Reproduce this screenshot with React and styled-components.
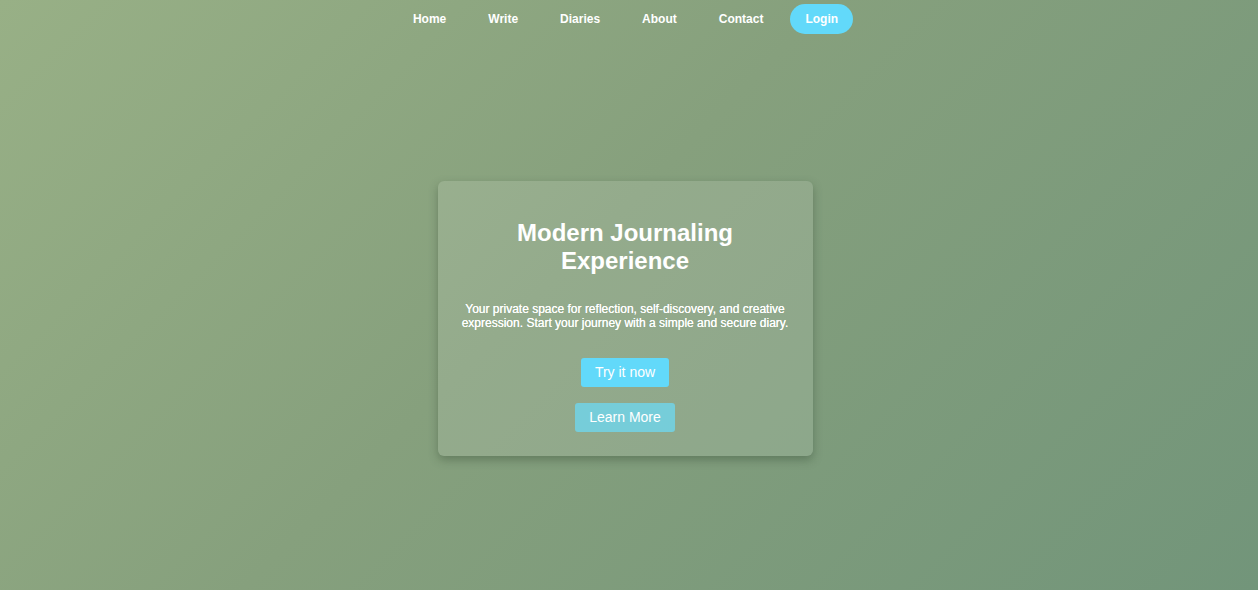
import React from "react";
import styled, { createGlobalStyle } from "styled-components";

const Global = createGlobalStyle`
  html, body { margin: 0; padding: 0; height: 100%; }
  body {
    font-family: "Liberation Sans", Arial, sans-serif;
    background: linear-gradient(135deg, #98b086 0%, #86a07d 45%, #72957a 100%);
    min-height: 590px;
    color: #fff;
  }
`;

const Page = styled.div`
  min-height: 590px;
  display: flex;
  flex-direction: column;
`;

const Nav = styled.nav`
  display: flex;
  justify-content: center;
  align-items: center;
  gap: 12px;
  padding: 4px 0;
  margin-left: -7px;
`;

const NavLink = styled.a`
  font-size: 12px;
  font-weight: 700;
  color: #fff;
  text-decoration: none;
  padding: 8px 15px;
  line-height: 14px;
  border-radius: 15px;
  background: ${(p) => (p.$primary ? "#62d9fa" : "transparent")};
`;

const Main = styled.main`
  flex: 1;
  display: flex;
  align-items: center;
  justify-content: center;
  padding: 8px 8px 0 0;
  height: 552px;
  box-sizing: border-box;
`;

const Card = styled.section`
  width: 375px;
  box-sizing: border-box;
  padding: 38px 24px 24px;
  background: rgba(255, 255, 255, 0.12);
  border-radius: 6px;
  box-shadow: 0 4px 10px rgba(40, 60, 40, 0.35);
  text-align: center;
  display: flex;
  flex-direction: column;
  align-items: center;
`;

const Title = styled.h1`
  margin: 0 0 27px;
  font-size: 24px;
  line-height: 28px;
  font-weight: 700;
`;

const Text = styled.p`
  margin: 0 0 28px;
  font-size: 12px;
  line-height: 14px;
  text-shadow: 0 0 0.4px #fff;
`;

const Button = styled.button`
  font-family: "Liberation Sans", Arial, sans-serif;
  font-size: 14px;
  line-height: 16px;
  color: #fff;
  border: none;
  border-radius: 3px;
  padding: 6.5px 14px;
  background: ${(p) => (p.$secondary ? "rgba(110, 215, 240, 0.78)" : "#62d9fa")};
  & + & {
    margin-top: 16px;
  }
`;

export default function App() {
  return (
    <>
      <Global />
      <Page>
        <Nav>
          <NavLink href="#">Home</NavLink>
          <NavLink href="#">Write</NavLink>
          <NavLink href="#">Diaries</NavLink>
          <NavLink href="#">About</NavLink>
          <NavLink href="#">Contact</NavLink>
          <NavLink href="#" $primary>Login</NavLink>
        </Nav>
        <Main>
          <Card>
            <Title>Modern Journaling Experience</Title>
            <Text>
              Your private space for reflection, self-discovery, and creative
              expression. Start your journey with a simple and secure diary.
            </Text>
            <Button>Try it now</Button>
            <Button $secondary>Learn More</Button>
          </Card>
        </Main>
      </Page>
    </>
  );
}
